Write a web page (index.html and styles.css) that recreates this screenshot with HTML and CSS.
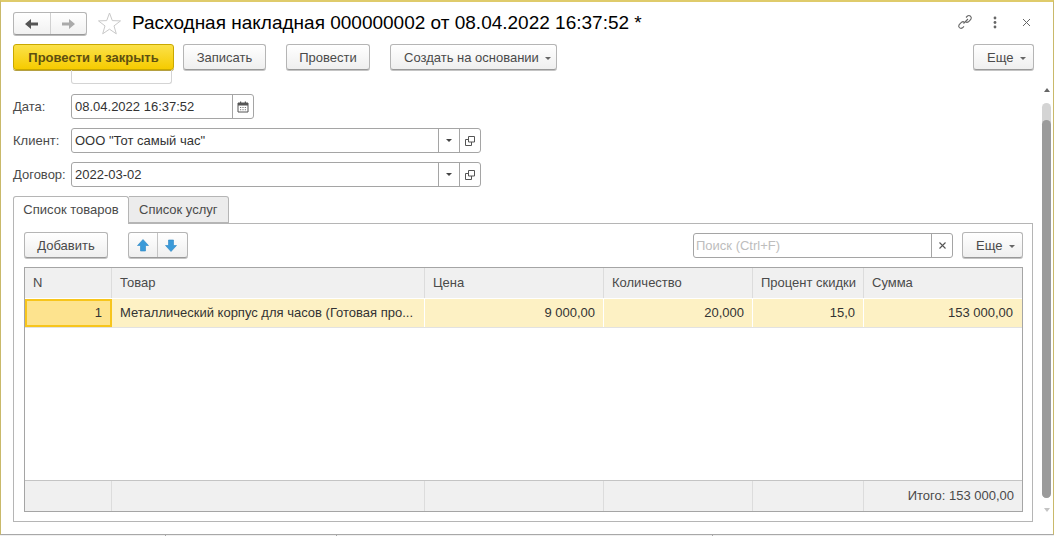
FILE: index.html
```html
<!DOCTYPE html>
<html lang="ru">
<head>
    <meta charset="UTF-8">
    <title>Расходная накладная</title>
    <link rel="stylesheet" href="styles.css">
</head>
<body>
    <div class="window">
        <div class="title-row">
            <div class="nav-group">
                <button class="nav-btn">
                    <svg width="16" height="12" viewBox="0 0 16 12"><path d="M1 6 L7 1 V4.5 H14 V7.5 H7 V11 Z" fill="#555"/></svg>
                </button>
                <button class="nav-btn">
                    <svg width="16" height="12" viewBox="0 0 16 12"><path d="M15 6 L9 1 V4.5 H2 V7.5 H9 V11 Z" fill="#aaa"/></svg>
                </button>
            </div>
            <svg class="star" width="25" height="25" viewBox="0 0 25 25"><path d="M12.5 2 L15.3 9.6 L23.5 9.9 L17 14.9 L19.3 22.8 L12.5 18.2 L5.7 22.8 L8 14.9 L1.5 9.9 L9.7 9.6 Z" fill="#fff" stroke="#c9c9c9"/></svg>
            <h1 class="title">Расходная накладная 000000002 от 08.04.2022 16:37:52 *</h1>
            <div class="win-icons">
                <svg class="icon-link" width="16" height="16" viewBox="0 0 16 16" fill="none" stroke="#666" stroke-width="1.1"><path d="M6.5 9.5 L11 5 M9 3.5 L10.5 2 Q12 1 13.5 2.2 Q15 3.8 13.8 5.5 L11.5 7.8 Q10 8.8 8.8 8 M7 8 Q6 7.2 4.6 8.2 L2.2 10.6 Q1 12.3 2.4 13.7 Q3.9 15 5.5 13.8 L7 12.3"/></svg>
                <svg class="icon-dots" width="4" height="13" viewBox="0 0 4 13" fill="#666"><circle cx="2" cy="2" r="1.4"/><circle cx="2" cy="6.5" r="1.4"/><circle cx="2" cy="11" r="1.4"/></svg>
                <svg class="icon-close" width="9" height="9" viewBox="0 0 9 9" stroke="#666" stroke-width="1"><path d="M1 1 L8 8 M8 1 L1 8"/></svg>
            </div>
        </div>

        <div class="toolbar">
            <button class="btn btn-primary">Провести и закрыть</button>
            <button class="btn btn-save">Записать</button>
            <button class="btn btn-post">Провести</button>
            <button class="btn btn-drop btn-create">Создать на основании <span class="caret"></span></button>
            <button class="btn btn-drop btn-more">Еще <span class="caret"></span></button>
        </div>

        <div class="body-area">
            <div class="form">
                <div class="clipped-field"></div>

                <div class="field-row">
                    <label class="field-label">Дата:</label>
                    <div class="input input-date">
                        <span class="input-value">08.04.2022 16:37:52</span>
                        <span class="input-btn">
                            <svg width="12" height="12" viewBox="0 0 12 12"><path d="M1 2 H11 V11 H1 Z" fill="none" stroke="#555"/><path d="M1 2 H11 V4.5 H1 Z M3 0.5 H4.2 V3 H3 Z M7.8 0.5 H9 V3 H7.8 Z" fill="#555"/><path d="M3 6 H4.2 V7 H3 Z M5.4 6 H6.6 V7 H5.4 Z M7.8 6 H9 V7 H7.8 Z M3 8.2 H4.2 V9.2 H3 Z M5.4 8.2 H6.6 V9.2 H5.4 Z M7.8 8.2 H9 V9.2 H7.8 Z" fill="#777"/></svg>
                        </span>
                    </div>
                </div>

                <div class="field-row">
                    <label class="field-label">Клиент:</label>
                    <div class="input input-wide">
                        <span class="input-value">ООО "Тот самый час"</span>
                        <span class="input-btn"><span class="caret caret-dark"></span></span>
                        <span class="input-btn">
                            <svg width="10" height="10" viewBox="0 0 10 10" fill="none" stroke="#555"><path d="M3.5 0.5 H9.5 V6 H3.5 Z"/><path d="M3.5 3.5 H0.5 V9.5 H6.5 V6"/></svg>
                        </span>
                    </div>
                </div>

                <div class="field-row">
                    <label class="field-label">Договор:</label>
                    <div class="input input-wide">
                        <span class="input-value">2022-03-02</span>
                        <span class="input-btn"><span class="caret caret-dark"></span></span>
                        <span class="input-btn">
                            <svg width="10" height="10" viewBox="0 0 10 10" fill="none" stroke="#555"><path d="M3.5 0.5 H9.5 V6 H3.5 Z"/><path d="M3.5 3.5 H0.5 V9.5 H6.5 V6"/></svg>
                        </span>
                    </div>
                </div>

                <div class="tabs">
                    <div class="tab tab-active">Список товаров</div>
                    <div class="tab">Список услуг</div>
                </div>

                <div class="tab-panel">
                    <div class="panel-toolbar">
                        <button class="btn btn-add">Добавить</button>
                        <div class="move-group">
                            <button class="move-btn">
                                <svg width="12" height="13" viewBox="0 0 12 13"><path d="M6 0.5 L11.5 6.5 H8.5 V12 H3.5 V6.5 H0.5 Z" fill="#3a9ad9" stroke="#2b86c4" stroke-width="0.6"/></svg>
                            </button>
                            <button class="move-btn">
                                <svg width="12" height="13" viewBox="0 0 12 13"><path d="M6 12.5 L11.5 6.5 H8.5 V1 H3.5 V6.5 H0.5 Z" fill="#3a9ad9" stroke="#2b86c4" stroke-width="0.6"/></svg>
                            </button>
                        </div>
                        <div class="search">
                            <span class="search-text">Поиск (Ctrl+F)</span>
                            <span class="search-clear">
                                <svg width="7" height="7" viewBox="0 0 7 7" stroke="#555" stroke-width="1.1"><path d="M0.5 0.5 L6.5 6.5 M6.5 0.5 L0.5 6.5"/></svg>
                            </span>
                        </div>
                        <button class="btn btn-drop btn-more-table">Еще <span class="caret"></span></button>
                    </div>

                    <div class="grid">
                        <div class="grid-row grid-head">
                            <div class="cell">N</div>
                            <div class="cell">Товар</div>
                            <div class="cell">Цена</div>
                            <div class="cell">Количество</div>
                            <div class="cell">Процент скидки</div>
                            <div class="cell">Сумма</div>
                        </div>
                        <div class="grid-row grid-data">
                            <div class="cell cell-num cell-current">1</div>
                            <div class="cell">Металлический корпус для часов (Готовая про...</div>
                            <div class="cell cell-num">9 000,00</div>
                            <div class="cell cell-num">20,000</div>
                            <div class="cell cell-num">15,0</div>
                            <div class="cell cell-num">153 000,00</div>
                        </div>
                        <div class="grid-empty"></div>
                        <div class="grid-row grid-foot">
                            <div class="cell"></div>
                            <div class="cell"></div>
                            <div class="cell"></div>
                            <div class="cell"></div>
                            <div class="cell"></div>
                            <div class="cell cell-num">Итого: 153 000,00</div>
                        </div>
                    </div>
                </div>
            </div>

            <div class="scrollbar">
                <span class="scroll-arrow scroll-up"></span>
                <div class="scroll-track"><div class="scroll-thumb"></div></div>
                <span class="scroll-arrow scroll-down"></span>
            </div>
        </div>
    </div>
    <div class="bottom-strip">
        <span class="strip-part strip-a"></span>
        <span class="strip-part strip-b"></span>
        <span class="strip-part strip-c"></span>
    </div>
</body>
</html>
```

FILE: styles.css
```css
* {
    margin: 0;
    padding: 0;
    box-sizing: border-box;
}

body {
    width: 1054px;
    height: 536px;
    overflow: hidden;
    background: #fff;
    font-family: "Liberation Sans", Arial, sans-serif;
    font-size: 13px;
    color: #4a4a4a;
}

.window {
    height: 535px;
    border-top: 2px solid #dfcb6b;
    border-left: 1px solid #c9b96a;
    border-right: 1px solid #c9b96a;
    border-bottom: 1px solid #a8a8a8;
    display: flex;
    flex-direction: column;
}

/* title */
.title-row {
    display: flex;
    align-items: center;
    height: 25px;
    margin-top: 9px;
    padding-left: 12px;
}

.nav-group {
    display: flex;
    width: 74px;
    height: 23px;
    border: 1px solid #b5b5b5;
    border-bottom-color: #999;
    border-radius: 3px;
    background: linear-gradient(#fff, #f1f1f1);
    box-shadow: 0 1px 0 #bbb;
}

.nav-btn {
    flex: 1;
    border: none;
    background: none;
    display: flex;
    align-items: center;
    justify-content: center;
}

.nav-btn + .nav-btn {
    border-left: 1px solid #d0d0d0;
}

.star {
    margin-left: 10px;
}

.title {
    margin-left: 10px;
    margin-top: -2px;
    font-size: 19px;
    font-weight: normal;
    color: #000;
    white-space: nowrap;
}

.win-icons {
    margin-left: auto;
    margin-top: -3px;
    display: flex;
    align-items: center;
    padding-right: 22px;
}

.icon-dots {
    margin-left: 20px;
}

.icon-close {
    margin-left: 25px;
}

/* buttons */
.toolbar {
    display: flex;
    height: 26px;
    margin-top: 8px;
    padding-left: 12px;
}

.btn {
    height: 26px;
    font-family: inherit;
    font-size: 13px;
    color: #4a4a4a;
    border: 1px solid #b5b5b5;
    border-bottom-color: #999;
    border-radius: 3px;
    background: linear-gradient(#fff, #efefef);
    box-shadow: 0 1px 0 #c4c4c4;
    white-space: nowrap;
}

.btn-drop {
    text-align: left;
    padding-left: 13px;
}

.btn-primary {
    width: 161px;
    font-weight: bold;
    color: #5e4f10;
    background: linear-gradient(#fbe14a, #f6cb00);
    border-color: #c9a800;
    box-shadow: 0 1px 0 #b5a040;
}

.btn-save {
    width: 83px;
    margin-left: 9px;
}

.btn-post {
    width: 84px;
    margin-left: 20px;
}

.btn-create {
    width: 167px;
    margin-left: 20px;
}

.btn-more {
    width: 61px;
    margin-left: 416px;
}

.caret {
    display: inline-block;
    width: 0;
    height: 0;
    margin-left: 3px;
    vertical-align: middle;
    border-left: 3px solid transparent;
    border-right: 3px solid transparent;
    border-top: 3px solid #666;
}

.caret-dark {
    margin-left: 0;
    border-top-color: #444;
}

/* form */
.body-area {
    flex: 1;
    display: flex;
    min-height: 0;
}

.form {
    width: 1041px;
    flex-shrink: 0;
    padding-left: 12px;
}

.clipped-field {
    width: 101px;
    height: 14px;
    margin-left: 58px;
    border: 1px solid #d4d4d4;
    border-top: none;
    border-radius: 0 0 3px 3px;
}

.field-row {
    display: flex;
    align-items: center;
    height: 25px;
    margin-top: 9px;
}

.clipped-field + .field-row {
    margin-top: 10px;
}

.field-label {
    width: 58px;
    flex-shrink: 0;
}

.input {
    display: flex;
    height: 25px;
    border: 1px solid #a5a5a5;
    border-radius: 3px;
    background: #fff;
}

.input-date {
    width: 183px;
}

.input-wide {
    width: 410px;
}

.input-value {
    flex: 1;
    padding-left: 3px;
    line-height: 23px;
    color: #333;
}

.input-btn {
    width: 21px;
    border-left: 1px solid #a5a5a5;
    display: flex;
    align-items: center;
    justify-content: center;
}

/* tabs */
.tabs {
    display: flex;
    height: 28px;
    margin-top: 9px;
    position: relative;
    z-index: 1;
}

.tab {
    height: 27px;
    padding: 0 10px;
    line-height: 25px;
    border: 1px solid #b5b5b5;
    border-left: none;
    border-radius: 0 3px 0 0;
    background: #ececec;
}

.tab-active {
    width: 116px;
    height: 28px;
    padding: 0;
    text-align: center;
    border-left: 1px solid #b5b5b5;
    border-bottom: none;
    border-radius: 3px 3px 0 0;
    background: #fff;
}

.tab-panel {
    width: 1020px;
    height: 299px;
    margin-top: -1px;
    padding: 8px 9px 0 10px;
    border: 1px solid #b5b5b5;
}

.panel-toolbar {
    display: flex;
    align-items: center;
    height: 26px;
}

.btn-add {
    width: 84px;
}

.move-group {
    display: flex;
    width: 60px;
    height: 26px;
    margin-left: 20px;
    border: 1px solid #b5b5b5;
    border-bottom-color: #999;
    border-radius: 3px;
    background: linear-gradient(#fff, #efefef);
    box-shadow: 0 1px 0 #c4c4c4;
}

.move-btn {
    flex: 1;
    border: none;
    background: none;
    display: flex;
    align-items: center;
    justify-content: center;
}

.move-btn + .move-btn {
    border-left: 1px solid #c4c4c4;
    padding-right: 2px;
}

.search {
    display: flex;
    width: 260px;
    height: 25px;
    margin-left: 505px;
    margin-top: 1px;
    border: 1px solid #a5a5a5;
    border-radius: 3px;
}

.search-text {
    flex: 1;
    padding-left: 2px;
    line-height: 23px;
    color: #bdbdbd;
}

.search-clear {
    width: 21px;
    border-left: 1px solid #a5a5a5;
    display: flex;
    align-items: center;
    justify-content: center;
}

.btn-more-table {
    width: 61px;
    margin-left: 9px;
}

/* table */
.grid {
    display: flex;
    flex-direction: column;
    height: 245px;
    margin-top: 9px;
    border: 1px solid #a5a5a5;
}

.grid-row {
    display: grid;
    grid-template-columns: 87px 313px 179px 149px 111px 1fr;
}

.grid-head {
    height: 31px;
    background: #f0f0f0;
    border-bottom: 1px solid #fff;
}

.grid-head .cell {
    line-height: 29px;
    padding: 0 0 0 8px;
    border-right: 1px solid #dcdcdc;
    white-space: nowrap;
}

.grid-head .cell:last-child,
.grid-data .cell:last-child {
    border-right: none;
    padding-right: 9px;
}

.grid-data {
    height: 29px;
    border-bottom: 1px solid #e2e2e2;
}

.grid-data .cell {
    line-height: 27px;
    padding: 0 8px;
    background: #fdf1c4;
    border-right: 1px solid #fff;
    color: #333;
    white-space: nowrap;
    overflow: hidden;
}

.grid-data .cell-current {
    background: #fde38e;
    border: 2px solid #f7c51c;
    line-height: 24px;
    padding-right: 8px;
}

.cell-num {
    text-align: right;
}

.grid-empty {
    flex: 1;
}

.grid-foot {
    height: 31px;
    background: #f0f0f0;
    border-top: 1px solid #c4c4c4;
}

.grid-foot .cell {
    line-height: 29px;
    padding: 0 8px;
    border-right: 1px solid #dcdcdc;
}

.grid-foot .cell:last-child {
    border-right: none;
}

/* scroll */
.scrollbar {
    width: 9px;
    flex-shrink: 0;
    padding-top: 18px;
    display: flex;
    flex-direction: column;
    align-items: center;
}

.scroll-arrow {
    width: 0;
    height: 0;
    border-left: 3px solid transparent;
    border-right: 3px solid transparent;
}

.scroll-up {
    border-bottom: 4px solid #666;
}

.scroll-down {
    margin-top: 10px;
    border-top: 4px solid #c4c4c4;
}

.scroll-track {
    width: 9px;
    height: 395px;
    margin-top: 11px;
    padding-top: 17px;
    background: #d4d4d4;
    border-radius: 5px;
}

.scroll-thumb {
    height: 378px;
    background: #9b9b9b;
    border-radius: 5px;
}

.bottom-strip {
    display: flex;
    height: 1px;
    background: #f0f0f0;
}

.strip-part {
    height: 1px;
    border-right: 1px solid #a8a8a8;
}

.strip-a {
    width: 166px;
}

.strip-b {
    width: 171px;
}

.strip-c {
    width: 376px;
}
```
